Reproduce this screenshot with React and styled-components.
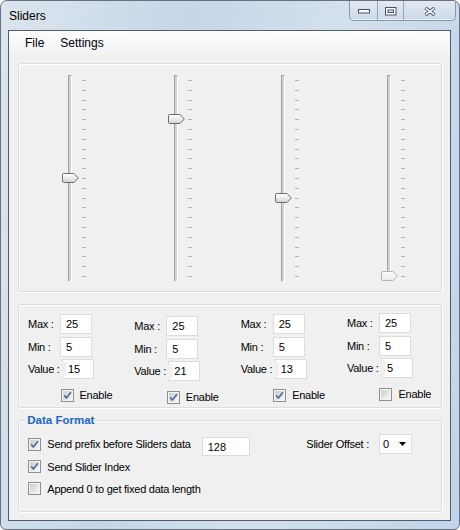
import React, { useId } from 'react';
import styled, { createGlobalStyle } from 'styled-components';

const GlobalStyle = createGlobalStyle`
  html, body {
    margin: 0;
    padding: 0;
    background: #ffffff;
  }
  body {
    font-family: "Liberation Sans", Arial, sans-serif;
  }
  * {
    box-sizing: border-box;
  }
`;

const sliders = [
  { max: 25, min: 5, value: 15, enabled: true, dy: 0 },
  { max: 25, min: 5, value: 21, enabled: true, dy: 2 },
  { max: 25, min: 5, value: 13, enabled: true, dy: 0 },
  { max: 25, min: 5, value: 5, enabled: false, dy: -1 },
];

const TICK_STEP = 9.8;

const Thumb = ({ top, disabled }) => {
  const id = useId();
  return (
    <ThumbStyle style={{ top }} width="17" height="10" viewBox="0 0 17 10">
      <defs>
        <linearGradient id={id} x1="0" y1="0" x2="0" y2="1">
          <stop offset="0" stopColor={disabled ? '#fafafa' : '#ffffff'} />
          <stop offset="0.5" stopColor={disabled ? '#f3f3f3' : '#ececec'} />
          <stop offset="1" stopColor={disabled ? '#ececec' : '#d2d2d2'} />
        </linearGradient>
      </defs>
      <path
        d="M0.5 1.8 Q0.5 0.5 1.8 0.5 L12 0.5 L16.3 5 L12 9.5 L1.8 9.5 Q0.5 9.5 0.5 8.2 Z"
        fill={`url(#${id})`}
        stroke={disabled ? '#b4b4b4' : '#6e6e6e'}
      />
    </ThumbStyle>
  );
};

const Ticks = () => (
  <TicksStyle width="4" height="207" viewBox="0 0 4 207">
    {Array.from({ length: 21 }).map((_, i) => {
      const y = Math.round(5 + i * TICK_STEP) + 0.5;
      return <line key={i} x1="0" x2="4" y1={y} y2={y} stroke="#b4b4b4" />;
    })}
  </TicksStyle>
);

const Slider = ({ item }) => (
  <SliderStyle>
    <TrackStyle />
    <Ticks />
    <Thumb top={(item.max - item.value) * TICK_STEP} disabled={!item.enabled} />
  </SliderStyle>
);

const CheckBox = ({ checked }) => {
  const id = useId();
  return (
    <CheckBoxStyle width="13" height="13" viewBox="0 0 13 13">
      <defs>
        <linearGradient id={id} x1="0" y1="0" x2="1" y2="1">
          <stop offset="0" stopColor="#cbcdd0" />
          <stop offset="1" stopColor="#f6f6f7" />
        </linearGradient>
      </defs>
      <rect x="0.5" y="0.5" width="12" height="12" fill="#f4f4f4" stroke="#8e8f8f" />
      <rect x="2" y="2" width="9" height="9" fill={`url(#${id})`} />
      {checked && (
        <path d="M3.2 6.4 L5.4 9 L9.9 3.2" stroke="#55699a" strokeWidth="1.7" fill="none" />
      )}
    </CheckBoxStyle>
  );
};

const ParamColumn = ({ item }) => (
  <ParamColumnStyle $dy={item.dy}>
    <ParamRowStyle>
      <FieldLabelStyle>Max :</FieldLabelStyle>
      <TextBoxStyle readOnly defaultValue={item.max} />
    </ParamRowStyle>
    <ParamRowStyle>
      <FieldLabelStyle>Min :</FieldLabelStyle>
      <TextBoxStyle readOnly defaultValue={item.min} />
    </ParamRowStyle>
    <ParamRowStyle>
      <FieldLabelStyle $cover>Value :</FieldLabelStyle>
      <TextBoxStyle readOnly defaultValue={item.value} />
    </ParamRowStyle>
    <EnableRowStyle>
      <CheckBox checked={item.enabled} />
      <CheckTextStyle>Enable</CheckTextStyle>
    </EnableRowStyle>
  </ParamColumnStyle>
);

const WindowButtons = () => (
  <ControlGroupStyle>
    <ControlButtonStyle $w={29}>
      <svg width="12" height="5" viewBox="0 0 12 5">
        <rect x="0.5" y="0.5" width="11" height="3.5" fill="#ffffff" stroke="#465467" />
      </svg>
    </ControlButtonStyle>
    <ControlButtonStyle $w={27}>
      <svg width="12" height="9" viewBox="0 0 12 9">
        <rect x="0.5" y="0.5" width="10.5" height="7.5" fill="#ffffff" stroke="#465467" />
        <rect x="3" y="3" width="5.5" height="2.5" fill="#dfe6ee" stroke="#465467" />
      </svg>
    </ControlButtonStyle>
    <ControlButtonStyle $w={52} $last>
      <svg width="12" height="9" viewBox="0 0 12 9">
        <path d="M1.5 1 L10.5 8 M10.5 1 L1.5 8" stroke="#465467" strokeWidth="3.4" />
        <path d="M1.8 1.3 L10.2 7.7 M10.2 1.3 L1.8 7.7" stroke="#ffffff" strokeWidth="1.6" />
      </svg>
    </ControlButtonStyle>
  </ControlGroupStyle>
);

const App = () => {
  return (
    <>
      <GlobalStyle />
      <WindowStyle>
        <TitleBarStyle>
          <TitleTextStyle>Sliders</TitleTextStyle>
          <WindowButtons />
        </TitleBarStyle>
        <ClientStyle>
          <MenuBarStyle>
            <MenuItemStyle>File</MenuItemStyle>
            <MenuItemStyle>Settings</MenuItemStyle>
          </MenuBarStyle>
          <ContentStyle>
            <SliderPanelStyle>
              {sliders.map((item, i) => (
                <Slider key={i} item={item} />
              ))}
            </SliderPanelStyle>
            <ParamPanelStyle>
              {sliders.map((item, i) => (
                <ParamColumn key={i} item={item} />
              ))}
            </ParamPanelStyle>
            <GroupBoxStyle>
              <GroupCaptionStyle>Data Format</GroupCaptionStyle>
              <OptionsColumnStyle>
                <OptionRowStyle>
                  <OptionItemStyle $w={173.4}>
                    <CheckBox checked />
                    <CheckTextStyle>Send prefix before Sliders data</CheckTextStyle>
                  </OptionItemStyle>
                  <TextBoxStyle $w={48} $h={19} readOnly defaultValue="128" />
                </OptionRowStyle>
                <OptionRowStyle>
                  <OptionItemStyle>
                    <CheckBox checked />
                    <CheckTextStyle>Send Slider Index</CheckTextStyle>
                  </OptionItemStyle>
                </OptionRowStyle>
                <OptionRowStyle>
                  <OptionItemStyle>
                    <CheckBox />
                    <CheckTextStyle>Append 0 to get fixed data length</CheckTextStyle>
                  </OptionItemStyle>
                </OptionRowStyle>
              </OptionsColumnStyle>
              <OffsetStyle>
                <OffsetLabelStyle>Slider Offset :</OffsetLabelStyle>
                <ComboStyle>
                  <span>0</span>
                  <svg width="7" height="4" viewBox="0 0 7 4">
                    <path d="M0 0 H7 L3.5 4 Z" fill="#000000" />
                  </svg>
                </ComboStyle>
              </OffsetStyle>
            </GroupBoxStyle>
          </ContentStyle>
        </ClientStyle>
      </WindowStyle>
    </>
  );
};

const WindowStyle = styled.div`
  width: 460px;
  height: 530px;
  display: flex;
  flex-direction: column;
  border: 1px solid #68727f;
  border-radius: 7px 7px 6px 6px;
  background: linear-gradient(100deg, #dce5ee 0%, #c6d6e8 35%, #d4e0ec 62%, #c1d4e9 100%);
  overflow: hidden;
`;

const TitleBarStyle = styled.div`
  height: 29px;
  flex-shrink: 0;
  display: flex;
  align-items: center;
  justify-content: space-between;
  padding-left: 8px;
`;

const TitleTextStyle = styled.div`
  font-size: 12px;
  color: #000000;
`;

const ControlGroupStyle = styled.div`
  align-self: flex-start;
  display: flex;
  height: 20px;
  margin-right: 3px;
  border: 1px solid #8796aa;
  border-top: none;
  border-radius: 0 0 5px 5px;
  overflow: hidden;
  background: linear-gradient(#e2eaf3, #cbd9e8);
  box-shadow: inset 0 -1px 0 rgba(255, 255, 255, 0.6);
`;

const ControlButtonStyle = styled.div`
  width: ${(p) => p.$w - 1}px;
  display: flex;
  align-items: center;
  justify-content: center;
  padding-top: 2px;
  border-right: ${(p) => (p.$last ? 'none' : '1px solid #97a6b8')};
`;

const ClientStyle = styled.div`
  flex: 1;
  margin: 0 8px 8px 7px;
  border: 1px solid #525d6c;
  background: #f0f0f0;
  display: flex;
  flex-direction: column;
`;

const MenuBarStyle = styled.div`
  height: 24px;
  flex-shrink: 0;
  display: flex;
  align-items: center;
  padding-left: 8px;
  background: linear-gradient(#fdfdfe, #eff1f4);
`;

const MenuItemStyle = styled.div`
  padding: 0 8px;
  font-size: 12px;
  color: #000000;
`;

const ContentStyle = styled.div`
  display: flex;
  flex-direction: column;
  padding: 8px 0 0 9px;
`;

const PanelBase = styled.div`
  width: 424px;
  border: 1px solid #d5dfe5;
  border-radius: 2px;
  box-shadow: inset 1px 1px 0 #ffffff, 1px 1px 0 #ffffff;
`;

const SliderPanelStyle = styled(PanelBase)`
  height: 229px;
  display: grid;
  grid-template-columns: repeat(4, 106.33px);
  padding: 11px 0 0 43px;
`;

const SliderStyle = styled.div`
  position: relative;
  height: 207px;
  display: flex;
  align-items: flex-start;
`;

const TrackStyle = styled.div`
  width: 4px;
  height: 207px;
  margin-left: 6px;
  background: #d2d2d2;
  border-left: 1px solid #a2a2a2;
  border-right: 1px solid #ffffff;
  border-top: 1px solid #a2a2a2;
  border-bottom: 1px solid #ffffff;
`;

const TicksStyle = styled.svg`
  display: block;
  margin-left: 10px;
`;

const ThumbStyle = styled.svg`
  position: absolute;
  left: 0;
  display: block;
`;

const ParamPanelStyle = styled(PanelBase)`
  height: 104px;
  margin-top: 12px;
  display: grid;
  grid-template-columns: repeat(4, 106.33px);
  align-items: start;
  padding: 9px 0 0 9px;
`;

const ParamColumnStyle = styled.div`
  margin-top: ${(p) => p.$dy}px;
  display: flex;
  flex-direction: column;
`;

const ParamRowStyle = styled.div`
  height: 20px;
  margin-bottom: 2.5px;
  display: flex;
  align-items: center;
`;

const FieldLabelStyle = styled.div`
  flex-shrink: 0;
  width: ${(p) => (p.$cover ? 38 : 32)}px;
  margin-right: ${(p) => (p.$cover ? -4 : 0)}px;
  position: relative;
  z-index: 1;
  line-height: 14px;
  background: #f0f0f0;
  font-size: 11px;
  letter-spacing: -0.25px;
  color: #000000;
  white-space: nowrap;
`;

const TextBoxStyle = styled.input`
  width: ${(p) => p.$w || 32}px;
  height: ${(p) => p.$h || 20}px;
  flex-shrink: 0;
  margin: 0;
  padding: 0 0 0 5px;
  border: 1px solid #dcdcdc;
  border-radius: 0;
  background: #ffffff;
  font-family: "Liberation Sans", Arial, sans-serif;
  font-size: 11px;
  color: #000000;
  outline: none;
`;

const EnableRowStyle = styled.div`
  margin-top: 6.5px;
  padding-left: 32.5px;
  display: flex;
  align-items: center;
`;

const CheckBoxStyle = styled.svg`
  display: block;
  flex-shrink: 0;
`;

const CheckTextStyle = styled.span`
  margin-left: 6px;
  padding-top: 1px;
  font-size: 11px;
  letter-spacing: -0.25px;
  line-height: 13px;
  color: #000000;
  white-space: nowrap;
`;

const GroupBoxStyle = styled(PanelBase)`
  position: relative;
  height: 92px;
  margin-top: 12px;
  border-radius: 3px;
  display: flex;
  align-items: flex-start;
  padding: 16.3px 29px 0 9.3px;
`;

const GroupCaptionStyle = styled.div`
  position: absolute;
  top: -8.5px;
  left: 6.3px;
  padding: 0 2px;
  line-height: 15px;
  background: #f0f0f0;
  font-size: 11.5px;
  font-weight: bold;
  color: #1a66cc;
`;

const OptionsColumnStyle = styled.div`
  display: flex;
  flex-direction: column;
`;

const OptionRowStyle = styled.div`
  height: 22.3px;
  display: flex;
  align-items: flex-start;
`;

const OptionItemStyle = styled.div`
  width: ${(p) => (p.$w ? `${p.$w}px` : 'auto')};
  flex-shrink: 0;
  display: flex;
  align-items: center;
`;

const OffsetStyle = styled.div`
  margin-left: auto;
  margin-top: -3px;
  height: 20px;
  display: flex;
  align-items: center;
`;

const OffsetLabelStyle = styled.span`
  margin-right: 10px;
  font-size: 11px;
  letter-spacing: -0.25px;
  color: #000000;
`;

const ComboStyle = styled.div`
  width: 33px;
  height: 20px;
  display: flex;
  align-items: center;
  justify-content: space-between;
  padding: 0 5px 0 3px;
  border: 1px solid #dcdcdc;
  background: #ffffff;
  font-size: 11px;
  color: #000000;
`;

export default App;
